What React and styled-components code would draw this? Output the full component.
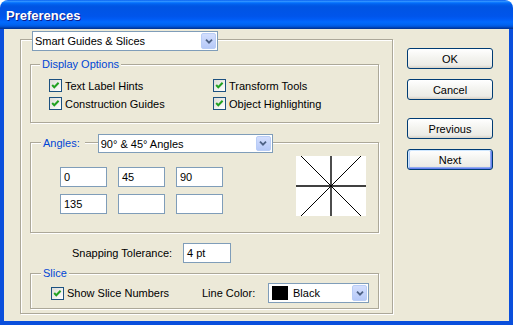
import styled, { createGlobalStyle } from "styled-components"

const GlobalStyle = createGlobalStyle`
    html, body {
        margin: 0;
        padding: 0;
        background: #fff;
    }
    body {
        font-family: "Liberation Sans", Arial, sans-serif;
        font-size: 11px;
        color: #000;
    }
`

function Chevron() {
    return (
        <svg width="8" height="5" viewBox="0 0 8 5">
            <path d="M1 0.7 L4 3.7 L7 0.7" fill="none" stroke="#4D6185" strokeWidth="1.8" />
        </svg>
    )
}

function Select({ width, height, children }) {
    return (
        <SelectBox $w={width} $h={height}>
            <SelectValue>{children}</SelectValue>
            <ArrowButton>
                <Chevron />
            </ArrowButton>
        </SelectBox>
    )
}

function Check({ children }) {
    return (
        <CheckLabel>
            <CheckBox>
                <svg width="11" height="11" viewBox="0 0 11 11">
                    <polyline points="2.2,5 4.3,7.3 8.6,2.8" fill="none" stroke="#21A121" strokeWidth="2" />
                </svg>
            </CheckBox>
            {children}
        </CheckLabel>
    )
}

function AnglePreview() {
    return (
        <Preview>
            <svg width="70" height="60" viewBox="0 0 70 60">
                <line x1="0" y1="30" x2="70" y2="30" stroke="#000" strokeWidth="1.4" />
                <line x1="35" y1="0" x2="35" y2="60" stroke="#000" strokeWidth="1.4" />
                <line x1="5" y1="0" x2="65" y2="60" stroke="#000" strokeWidth="1" />
                <line x1="65" y1="0" x2="5" y2="60" stroke="#000" strokeWidth="1" />
            </svg>
        </Preview>
    )
}

function App() {
    return (
        <>
            <GlobalStyle />
            <Window>
                <TitleBar>Preferences</TitleBar>
                <Body>
                    <Group $pad="0 13px 4px 9px">
                        <Legend $lift={9} $ml={2}>
                            <Select width={186} height={20}>Smart Guides &amp; Slices</Select>
                        </Legend>

                        <Group $mt={13}>
                            <Legend $lift={7} $ml={9}>
                                <LegendText>Display Options</LegendText>
                            </Legend>
                            <CheckGrid>
                                <Check>Text Label Hints</Check>
                                <Check>Transform Tools</Check>
                                <Check>Construction Guides</Check>
                                <Check>Object Highlighting</Check>
                            </CheckGrid>
                        </Group>

                        <Group $mt={19}>
                            <Legend $lift={9} $ml={10}>
                                <LegendText $tall>Angles:</LegendText>
                                <Segment />
                                <Select width={175} height={19}>90° &amp; 45° Angles</Select>
                            </Legend>
                            <AngleRow>
                                <AngleGrid>
                                    <Field>0</Field>
                                    <Field>45</Field>
                                    <Field>90</Field>
                                    <Field>135</Field>
                                    <Field />
                                    <Field />
                                </AngleGrid>
                                <AnglePreview />
                            </AngleRow>
                        </Group>

                        <SnapRow>
                            <SnapLabel>Snapping Tolerance:</SnapLabel>
                            <Field $w={48}>4 pt</Field>
                        </SnapRow>

                        <Group $mt={10}>
                            <Legend $lift={7} $ml={10}>
                                <LegendText>Slice</LegendText>
                            </Legend>
                            <SliceRow>
                                <SliceCheck>
                                    <Check>Show Slice Numbers</Check>
                                </SliceCheck>
                                <ColorLabel>Line Color:</ColorLabel>
                                <Select width={101} height={20}>
                                    <Swatch />
                                    Black
                                </Select>
                            </SliceRow>
                        </Group>
                    </Group>

                    <ButtonColumn>
                        <Button>OK</Button>
                        <Button $gap={10}>Cancel</Button>
                        <Button $gap={18}>Previous</Button>
                        <Button $gap={10} $focused>Next</Button>
                    </ButtonColumn>
                </Body>
            </Window>
        </>
    )
}

const Window = styled.div`
    width: 513px;
    height: 325px;
    display: flex;
    flex-direction: column;
`

const TitleBar = styled.div`
    height: 29px;
    flex: none;
    box-sizing: border-box;
    padding: 1px 0 0 6px;
    display: flex;
    align-items: center;
    border-radius: 8px 8px 0 0;
    background: linear-gradient(to bottom, #0058ee 0%, #3593ff 4%, #288eff 6%, #127dff 8%, #036ffc 10%, #0262ee 14%, #0057e5 20%, #0054e3 24%, #0055eb 56%, #005bf5 66%, #026afe 76%, #0062ef 86%, #0052d6 92%, #0040ab 96%, #003092 100%);
    color: #fff;
    font-weight: bold;
    font-size: 13px;
    text-shadow: 1px 1px 0 #0f1a8a;
`

const Body = styled.div`
    flex: 1;
    display: flex;
    align-items: flex-start;
    background: #ece9d8;
    border: 4px solid #0a4fdc;
    border-top: none;
    padding: 10px 0 0 16px;
`

const Group = styled.div`
    display: flex;
    flex-direction: column;
    width: ${p => (p.$pad ? "373px" : "auto")};
    box-sizing: border-box;
    padding: ${p => p.$pad || "0"};
    margin-top: ${p => p.$mt || 0}px;
    border: 1px solid #aca899;
    box-shadow: inset 1px 1px 0 #fff, 1px 1px 0 #fff;
`

const Legend = styled.div`
    display: flex;
    align-items: center;
    align-self: flex-start;
    margin: -${p => p.$lift}px 0 0 ${p => p.$ml}px;
`

const LegendText = styled.span`
    background: #ece9d8;
    color: #0046d5;
    line-height: ${p => (p.$tall ? "19px" : "13px")};
    padding: ${p => (p.$tall ? "0 5px 0 2px" : "0 2px")};
`

const Segment = styled.div`
    width: 13px;
    height: 0;
    align-self: flex-start;
    margin-top: 8px;
`

const SelectBox = styled.div`
    display: flex;
    width: ${p => p.$w}px;
    height: ${p => p.$h}px;
    box-sizing: border-box;
    border: 1px solid #7f9db9;
    background: #fff;
    padding: 1px;
`

const SelectValue = styled.div`
    flex: 1;
    display: flex;
    align-items: center;
    gap: 5px;
    padding-left: 1px;
    white-space: nowrap;
    overflow: hidden;
`

const ArrowButton = styled.div`
    width: 15px;
    flex: none;
    box-sizing: border-box;
    display: flex;
    align-items: center;
    justify-content: center;
    border: 1px solid #b9cdf6;
    border-radius: 2px;
    background: linear-gradient(to bottom, #d3defd, #b6c9f8);
`

const Swatch = styled.span`
    width: 16px;
    height: 14px;
    margin-left: 1px;
    background: #000;
    flex: none;
`

const CheckGrid = styled.div`
    display: grid;
    grid-template-columns: 164px auto;
    grid-auto-rows: 13px;
    row-gap: 5px;
    margin: 8px 0 12px 18px;
`

const CheckLabel = styled.label`
    display: flex;
    align-items: center;
    gap: 3px;
    white-space: nowrap;
`

const CheckBox = styled.span`
    width: 13px;
    height: 13px;
    box-sizing: border-box;
    flex: none;
    display: flex;
    border: 1px solid #1c5180;
    background: linear-gradient(135deg, #dcdcd7, #fff);
`

const AngleRow = styled.div`
    display: flex;
    align-items: flex-start;
    gap: 73px;
    padding: 3px 0 16px 29px;
`

const AngleGrid = styled.div`
    display: grid;
    grid-template-columns: repeat(3, 47px);
    grid-auto-rows: 20px;
    column-gap: 11px;
    row-gap: 7px;
    margin-top: 11px;
`

const Field = styled.div`
    width: ${p => (p.$w ? `${p.$w}px` : "auto")};
    height: 20px;
    box-sizing: border-box;
    border: 1px solid #7f9db9;
    background: #fff;
    padding-left: 3px;
    display: flex;
    align-items: center;
`

const Preview = styled.div`
    width: 70px;
    height: 60px;
    background: #fff;
    display: flex;
`

const SnapRow = styled.div`
    display: flex;
    align-items: center;
    margin-top: 10px;
    padding-left: 42px;
`

const SnapLabel = styled.span`
    width: 111px;
`

const SliceRow = styled.div`
    display: flex;
    align-items: center;
    padding: 3px 0 5px 20px;
`

const SliceCheck = styled.div`
    width: 151px;
`

const ColorLabel = styled.span`
    width: 66px;
`

const ButtonColumn = styled.div`
    display: flex;
    flex-direction: column;
    width: 86px;
    margin: 9px 0 0 14px;
`

const Button = styled.button`
    height: 21px;
    margin-top: ${p => p.$gap || 0}px;
    padding: 0;
    border: 1px solid #003c74;
    border-radius: 3px;
    background: linear-gradient(to bottom, #fff 0%, #f4f4f0 45%, #ecebe6 85%, #d6d0c5 100%);
    font-family: "Liberation Sans", Arial, sans-serif;
    font-size: 11px;
    color: #000;
    box-shadow: ${p => (p.$focused
        ? "inset 1px 1px 0 #cee7ff, inset -1px -1px 0 #6982ee, inset 0 -2px 0 #8faaf0, inset 2px 0 0 #b5cdf7, inset -2px 0 0 #8faaf0"
        : "none")};
`

export default App
